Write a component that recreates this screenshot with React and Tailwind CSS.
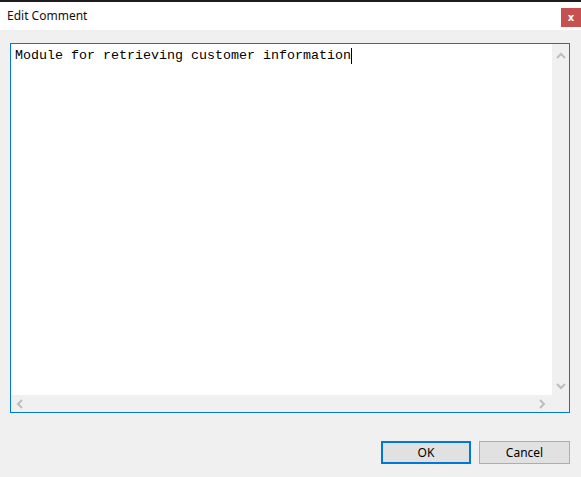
import React from 'react';

const Chevron = ({ dir }) => {
  const paths = {
    up: 'M1 6 L5 2 L9 6',
    down: 'M1 2 L5 6 L9 2',
    left: 'M6 1 L2 5 L6 9',
    right: 'M2 1 L6 5 L2 9',
  };
  const vertical = dir === 'up' || dir === 'down';
  return (
    <svg width={vertical ? 10 : 8} height={vertical ? 8 : 10} viewBox={vertical ? '0 0 10 8' : '0 0 8 10'}>
      <path d={paths[dir]} fill="none" stroke="#bdbdbd" strokeWidth="2" />
    </svg>
  );
};

export default function App() {
  return (
    <div className="w-[581px] h-[477px] flex flex-col bg-[#f0f0f0] overflow-hidden" style={{ fontFamily: '"Noto Sans", "Open Sans", sans-serif' }}>
      <div className="h-[2px] bg-[#1c1c1c]" />
      <div className="h-[28px] bg-white flex items-start justify-between">
        <span className="pl-[7px] pt-[6px] text-[12px] leading-[16px] text-[#111]">Edit Comment</span>
        <button className="mt-[6px] w-[20px] h-[19px] bg-[#c75050] text-white text-[10px] font-bold leading-none flex items-center justify-center" style={{ fontFamily: '"DejaVu Sans", sans-serif' }}>
          x
        </button>
      </div>
      <div className="flex-1 flex flex-col pl-[10px] pr-[11px] pt-[13px]">
        <div className="h-[370px] border border-[#0078d7] bg-white flex flex-col">
          <div className="flex-1 flex">
            <div className="flex-1 pl-[4px] pt-[4px]">
              <div className="flex items-center text-[13.33px] leading-[16px] text-black" style={{ fontFamily: '"Liberation Mono", monospace' }}>
                <span className="whitespace-pre">Module for retrieving customer information</span>
                <span className="w-px h-[16px] bg-black" />
              </div>
            </div>
            <div className="w-[17px] bg-[#f0f0f0] flex flex-col items-center justify-between pt-[8px] pb-[5px]">
              <Chevron dir="up" />
              <Chevron dir="down" />
            </div>
          </div>
          <div className="h-[17px] bg-[#f0f0f0] flex items-center justify-between pl-[5px] pr-[23px]">
            <Chevron dir="left" />
            <Chevron dir="right" />
          </div>
        </div>
        <div className="flex justify-end gap-[8px] mt-[28px]">
          <button className="w-[90px] h-[23px] border-2 border-[#0078d7] bg-[#e1e1e1] text-[12px] text-black">OK</button>
          <button className="w-[91px] h-[23px] border border-[#adadad] bg-[#e1e1e1] text-[12px] text-black">Cancel</button>
        </div>
      </div>
    </div>
  );
}
